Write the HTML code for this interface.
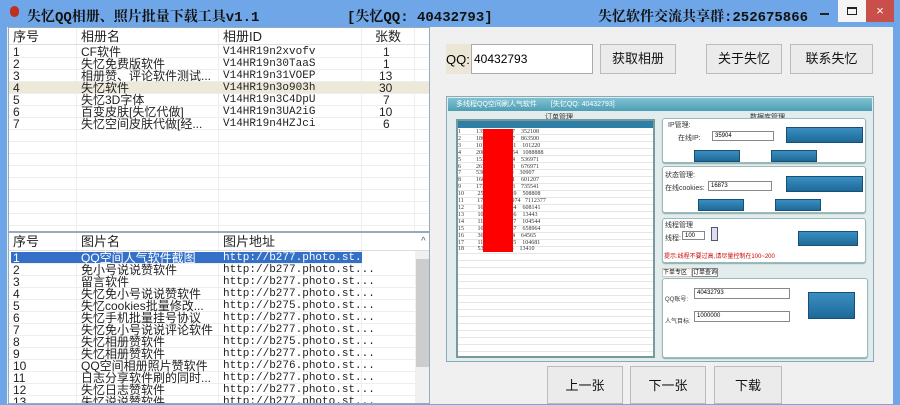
<!DOCTYPE html>
<html><head><meta charset="utf-8"><style>
*{margin:0;padding:0;box-sizing:border-box}
body{width:900px;height:404px;overflow:hidden;background:#6ea6e8;font-family:"Liberation Sans","Noto Sans CJK SC",sans-serif;position:relative}
.a{position:absolute}
.title{position:absolute;font-weight:bold;font-size:14px;color:#111;top:6px;font-family:"Liberation Mono","Noto Serif CJK SC",monospace}
.lv{position:absolute;background:#fff;border:1px solid #9ab;overflow:hidden;font-size:12px;color:#222}
.r{position:absolute;left:0;width:100%;height:12px;line-height:12px;border-bottom:1px solid #eee}
.r span{position:absolute;white-space:nowrap;top:0}
.m{font-family:"Liberation Mono",monospace;font-size:11px}
.h{position:absolute;top:0;left:0;width:100%;height:17px;line-height:17px;font-size:13px;border-bottom:1px solid #ddd}
.h span{position:absolute}
.vl{position:absolute;top:0;bottom:0;width:1px;background:#eee}
.btn{position:absolute;background:#ebebeb;border:1px solid #bbb;font-size:13px;text-align:center;color:#111}
.ib{position:absolute;background:linear-gradient(#3a8fc0,#1d6a9a);border:1px solid #174f75}
.box{position:absolute;background:#fff;border:1px solid #9bb;border-radius:3px;box-shadow:0 1px 1px #8aa}
.t{position:absolute;font-size:7px;color:#333;white-space:nowrap}
.in{position:absolute;background:#fff;border:1px solid #888;font-size:6px;line-height:8px;padding-left:2px}
</style></head><body>
<div class="a" style="left:10px;top:6px;width:9px;height:11px;border-radius:5px;background:#c03020"></div>
<div class="title" style="left:27px">失忆QQ相册、照片批量下载工具v1.1</div>
<div class="title" style="left:347px">[失忆QQ: 40432793]</div>
<div class="title" style="left:598px">失忆软件交流共享群:252675866</div>
<div class="a" style="left:820px;top:13px;width:9px;height:2px;background:#222"></div>
<div class="a" style="left:838px;top:0;width:28px;height:22px;background:#f5f5f5"></div>
<div class="a" style="left:847px;top:7px;width:10px;height:8px;border:1px solid #222;border-top-width:2px"></div>
<div class="a" style="left:866px;top:0;width:28px;height:22px;background:#c9504a;color:#fff;font-size:13px;text-align:center;line-height:22px">×</div>
<div class="a" style="left:7px;top:27px;width:886px;height:377px;background:#f0f0f0"></div>

<!-- top list -->
<div class="lv" style="left:8px;top:27px;width:422px;height:205px">
<div class="vl" style="left:67px"></div><div class="vl" style="left:209px"></div><div class="vl" style="left:352px"></div><div class="vl" style="left:405px"></div>
<div class="h"><span style="left:4px">序号</span><span style="left:72px">相册名</span><span style="left:214px">相册ID</span><span style="left:366px">张数</span></div>
<div class="r" style="top:18px"><span style="left:4px">1</span><span style="left:72px">CF软件</span><span class="m" style="left:214px">V14HR19n2xvofv</span><span style="left:374px">1</span></div>
<div class="r" style="top:30px"><span style="left:4px">2</span><span style="left:72px">失忆免费版软件</span><span class="m" style="left:214px">V14HR19n30TaaS</span><span style="left:374px">1</span></div>
<div class="r" style="top:42px"><span style="left:4px">3</span><span style="left:72px">相册赞、评论软件测试...</span><span class="m" style="left:214px">V14HR19n31VOEP</span><span style="left:370px">13</span></div>
<div class="r" style="top:54px;background:#ece9d8"><span style="left:4px">4</span><span style="left:72px">失忆软件</span><span class="m" style="left:214px">V14HR19n3o903h</span><span style="left:370px">30</span></div>
<div class="r" style="top:66px"><span style="left:4px">5</span><span style="left:72px">失忆3D字体</span><span class="m" style="left:214px">V14HR19n3C4DpU</span><span style="left:374px">7</span></div>
<div class="r" style="top:78px"><span style="left:4px">6</span><span style="left:72px">百变皮肤[失忆代做]</span><span class="m" style="left:214px">V14HR19n3UA2iG</span><span style="left:370px">10</span></div>
<div class="r" style="top:90px"><span style="left:4px">7</span><span style="left:72px">失忆空间皮肤代做[经...</span><span class="m" style="left:214px">V14HR19n4HZJci</span><span style="left:374px">6</span></div>
<div class="r" style="top:102px"></div><div class="r" style="top:114px"></div><div class="r" style="top:126px"></div><div class="r" style="top:138px"></div><div class="r" style="top:150px"></div><div class="r" style="top:162px"></div><div class="r" style="top:174px"></div><div class="r" style="top:186px"></div>
</div>

<!-- bottom list -->
<div class="lv" style="left:8px;top:232px;width:422px;height:172px">
<div class="vl" style="left:67px"></div><div class="vl" style="left:209px"></div><div class="vl" style="left:352px"></div>
<div class="h" style="height:18px;line-height:18px"><span style="left:4px">序号</span><span style="left:72px">图片名</span><span style="left:214px">图片地址</span><span style="left:412px;font-size:10px;color:#666">^</span></div>
<div class="r" style="top:19px;width:351px;background:#3470c8;color:#fff;left:2px"><span style="left:2px">1</span><span style="left:70px">QQ空间人气软件截图</span><span class="m" style="left:212px">http://b277.photo.st...</span></div>
<div class="r" style="top:31px"><span style="left:4px">2</span><span style="left:72px">免小号说说赞软件</span><span class="m" style="left:214px">http://b277.photo.st...</span></div>
<div class="r" style="top:43px"><span style="left:4px">3</span><span style="left:72px">留言软件</span><span class="m" style="left:214px">http://b277.photo.st...</span></div>
<div class="r" style="top:55px"><span style="left:4px">4</span><span style="left:72px">失忆免小号说说赞软件</span><span class="m" style="left:214px">http://b277.photo.st...</span></div>
<div class="r" style="top:67px"><span style="left:4px">5</span><span style="left:72px">失忆cookies批量修改...</span><span class="m" style="left:214px">http://b275.photo.st...</span></div>
<div class="r" style="top:79px"><span style="left:4px">6</span><span style="left:72px">失忆手机批量挂号协议</span><span class="m" style="left:214px">http://b277.photo.st...</span></div>
<div class="r" style="top:91px"><span style="left:4px">7</span><span style="left:72px">失忆免小号说说评论软件</span><span class="m" style="left:214px">http://b277.photo.st...</span></div>
<div class="r" style="top:103px"><span style="left:4px">8</span><span style="left:72px">失忆相册赞软件</span><span class="m" style="left:214px">http://b275.photo.st...</span></div>
<div class="r" style="top:115px"><span style="left:4px">9</span><span style="left:72px">失忆相册赞软件</span><span class="m" style="left:214px">http://b277.photo.st...</span></div>
<div class="r" style="top:127px"><span style="left:4px">10</span><span style="left:72px">QQ空间相册照片赞软件</span><span class="m" style="left:214px">http://b276.photo.st...</span></div>
<div class="r" style="top:139px"><span style="left:4px">11</span><span style="left:72px">日志分享软件刷的同时...</span><span class="m" style="left:214px">http://b277.photo.st...</span></div>
<div class="r" style="top:151px"><span style="left:4px">12</span><span style="left:72px">失忆日志赞软件</span><span class="m" style="left:214px">http://b277.photo.st...</span></div>
<div class="r" style="top:163px"><span style="left:4px">13</span><span style="left:72px">失忆说说赞软件</span><span class="m" style="left:214px">http://b277.photo.st...</span></div>
<div class="a" style="left:406px;top:18px;width:15px;height:154px;background:#f0f0f0"></div>
<div class="a" style="left:407px;top:26px;width:13px;height:108px;background:#cdcdcd"></div>
</div>

<!-- right controls -->
<div class="a" style="left:446px;top:44px;width:26px;height:30px;background:#ebe6d6"></div>
<div class="a" style="left:446px;top:52px;font-size:13px">QQ:</div>
<div class="a" style="left:471px;top:44px;width:122px;height:30px;background:#fff;border:1px solid #aaa;font-size:12px;line-height:28px;padding-left:2px">40432793</div>
<div class="btn" style="left:600px;top:44px;width:76px;height:30px;line-height:28px">获取相册</div>
<div class="btn" style="left:706px;top:44px;width:76px;height:30px;line-height:28px">关于失忆</div>
<div class="btn" style="left:790px;top:44px;width:83px;height:30px;line-height:28px">联系失忆</div>

<!-- embedded screenshot -->
<div class="a" style="left:446px;top:96px;width:428px;height:266px;background:#e2eced;border:1px solid #8ab"></div>
<div class="a" style="left:448px;top:98px;width:424px;height:13px;background:linear-gradient(#7fc3d3,#4f9db3);font-size:7px;color:#fff;line-height:13px;padding-left:8px">多线程QQ空间刷人气软件　　[失忆QQ: 40432793]</div>
<div class="t" style="left:545px;top:112px">订单管理</div>
<div class="t" style="left:750px;top:112px">数据库管理</div>
<div class="a" style="left:456px;top:119px;width:199px;height:239px;background:#fff;border:2px solid #7a9a9a;background-image:repeating-linear-gradient(#fff 0 6px,#e6e6e6 6px 7px)"></div>
<div class="a" style="left:458px;top:121px;width:195px;height:7px;background:#2e7fa8"></div>
<div class="a" style="left:458px;top:129px;width:195px;height:125px;font-size:6px;line-height:6.9px;color:#333;font-family:'Liberation Serif',serif;white-space:pre">1          1352108    1637    352108
2          1863500    3987    863500
3          10181220   1511    101220
4          2088888    19354   1088888
5          1536971    3634    536971
6          2676973    5693    676971
7          530907     2460    30907
8          1601207    2741    601207
9          1735541    6713    735541
10         2508808    4539    508808
11         17112377   13974   7112377
12         1608141    4144    608141
13         1013443    3186    13443
14         1104544    2767    104544
15         1658964    2767    658964
16         364565     3564    64565
17         1104681    2805    104681
18         534x0      1836    13410</pre></div>
<div class="a" style="left:483px;top:129px;width:30px;height:123px;background:#f00"></div>
<div class="box" style="left:662px;top:118px;width:204px;height:45px"></div>
<div class="box" style="left:662px;top:166px;width:204px;height:47px"></div>
<div class="box" style="left:662px;top:218px;width:204px;height:45px"></div>
<div class="t" style="left:668px;top:120px">IP管理:</div>
<div class="t" style="left:678px;top:133px">在线IP:</div>
<div class="in" style="left:712px;top:131px;width:62px;height:10px">35904</div>
<div class="t" style="left:665px;top:170px">状态管理:</div>
<div class="t" style="left:665px;top:183px">在线cookies:</div>
<div class="in" style="left:708px;top:181px;width:64px;height:10px">16873</div>
<div class="t" style="left:665px;top:220px">线程管理</div>
<div class="t" style="left:665px;top:233px">线程:</div>
<div class="in" style="left:682px;top:231px;width:23px;height:9px">100</div>
<div class="a" style="left:711px;top:227px;width:7px;height:14px;border:1px solid #557;background:#dde"></div>
<div class="ib" style="left:786px;top:127px;width:77px;height:16px"></div>
<div class="ib" style="left:694px;top:150px;width:46px;height:12px"></div>
<div class="ib" style="left:771px;top:150px;width:46px;height:12px"></div>
<div class="ib" style="left:786px;top:176px;width:77px;height:16px"></div>
<div class="ib" style="left:698px;top:199px;width:46px;height:12px"></div>
<div class="ib" style="left:775px;top:199px;width:46px;height:12px"></div>
<div class="ib" style="left:798px;top:231px;width:60px;height:15px"></div>
<div class="a" style="left:664px;top:251px;font-size:6px;color:#c00;white-space:nowrap">提示:线程不要过高,请尽量控制在100~200</div>
<div class="a" style="left:662px;top:268px;width:30px;height:9px;border:1px solid #ccb;background:#fff;font-size:6px;line-height:8px">下单专区</div>
<div class="a" style="left:692px;top:268px;width:26px;height:9px;border:1px solid #888;background:#fff;font-size:6px;line-height:8px">订单查询</div>
<div class="box" style="left:662px;top:278px;width:206px;height:80px"></div>
<div class="t" style="left:665px;top:294px;font-size:6px">QQ账号:</div>
<div class="in" style="left:694px;top:288px;width:96px;height:11px">40432793</div>
<div class="t" style="left:665px;top:316px;font-size:6px">人气目标:</div>
<div class="in" style="left:694px;top:311px;width:96px;height:11px">1000000</div>
<div class="ib" style="left:808px;top:292px;width:47px;height:27px"></div>

<div class="btn" style="left:547px;top:366px;width:76px;height:38px;line-height:38px">上一张</div>
<div class="btn" style="left:630px;top:366px;width:76px;height:38px;line-height:38px">下一张</div>
<div class="btn" style="left:714px;top:366px;width:68px;height:38px;line-height:38px">下载</div>
</body></html>
